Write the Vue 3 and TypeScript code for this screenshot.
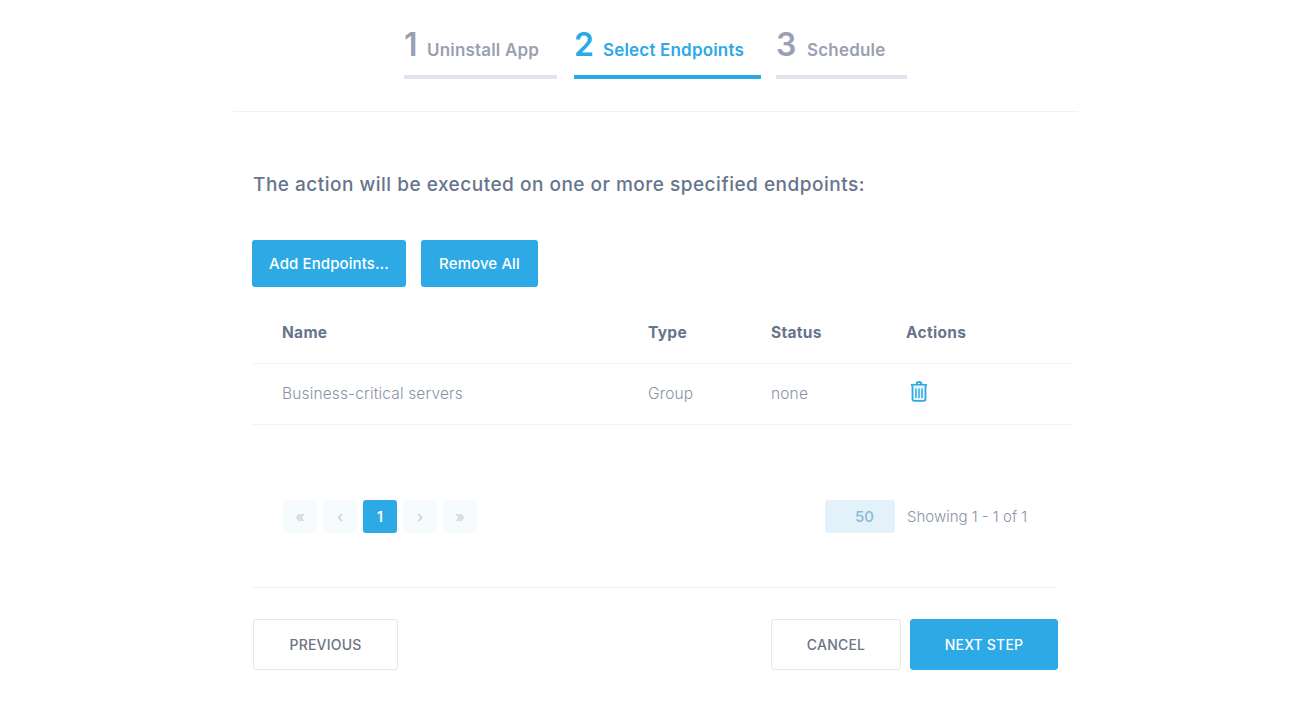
<script setup lang="ts">
interface Step { num: number; label: string; active: boolean; width: number; gap: number }
const steps: Step[] = [
  { num: 1, label: 'Uninstall App', active: false, width: 153, gap: 17 },
  { num: 2, label: 'Select Endpoints', active: true, width: 187, gap: 15 },
  { num: 3, label: 'Schedule', active: false, width: 131, gap: 0 },
]
const pages = ['«', '‹', '1', '›', '»']
</script>

<template>
  <div class="page">
    <div class="wizard">
      <nav class="steps">
        <div
          v-for="s in steps"
          :key="s.num"
          class="step"
          :class="{ active: s.active }"
          :style="{ width: s.width + 'px', marginRight: s.gap + 'px' }"
        >
          <span class="num">{{ s.num }}</span>
          <span class="label">{{ s.label }}</span>
        </div>
      </nav>

      <section class="body">
        <h2 class="title">The action will be executed on one or more specified endpoints:</h2>

        <div class="actions">
          <button class="btn add">Add Endpoints...</button>
          <button class="btn remove">Remove All</button>
        </div>

        <div class="table">
          <div class="row head">
            <span>Name</span><span>Type</span><span>Status</span><span>Actions</span>
          </div>
          <div class="row item">
            <span>Business-critical servers</span><span>Group</span><span>none</span>
            <span class="icon-cell">
              <svg width="18" height="21" viewBox="0 0 18 21" fill="none" stroke="#2daae6">
                <path d="M1 4h16" stroke-width="2" />
                <path d="M6.5 3.5C6.5 1.5 7.5 1 9 1s2.500.5 2.500 2.500" stroke-width="2" />
                <path d="M2.500 4.500v13.500c0 1 .6 1.800 1.800 1.800h9.400c1.200 0 1.800-.8 1.800-1.800V4.500" stroke-width="1.800" fill="#e6f4fc" />
                <path d="M6 7.500v9.500M9 7.500v9.500M12 7.500v9.500" stroke-width="1.500" />
              </svg>
            </span>
          </div>
        </div>

        <div class="pager">
          <div class="pages">
            <span v-for="(p, i) in pages" :key="i" class="pg" :class="{ current: p === '1' }">{{ p }}</span>
          </div>
          <div class="size">
            <span class="select">50</span>
            <span class="showing">Showing 1 - 1 of 1</span>
          </div>
        </div>

        <div class="footer">
          <button class="fbtn prev">PREVIOUS</button>
          <div class="right">
            <button class="fbtn cancel">CANCEL</button>
            <button class="fbtn next">NEXT STEP</button>
          </div>
        </div>
      </section>
    </div>
  </div>
</template>

<style>
html, body { margin: 0; background: #fff; }
</style>

<style scoped>
.page {
  width: 1308px;
  height: 710px;
  overflow: hidden;
  background: #fff;
  font-family: "Inter", "Open Sans", sans-serif;
  color: #6b7a90;
  padding: 0 0 0 233px;
  box-sizing: border-box;
}
.wizard { width: 845px; }
.steps {
  display: flex;
  padding: 26px 0 0 171px;
  height: 85px;
  box-sizing: content-box;
  border-bottom: 1px solid #f1f2f5;
}
.step {
  height: 53px;
  box-sizing: border-box;
  border-bottom: 4px solid #e0e3ec;
  display: flex;
  align-items: baseline;
  color: #9a9fb4;
  align-self: flex-start;
}
.step.active { border-bottom-color: #2daae6; color: #2daae6; }
.num { font-size: 32px; font-weight: 600; line-height: 38px; width: 23px; }
.step:nth-child(2) .num { width: 29px; }
.step:nth-child(3) .num { width: 31px; }
.label { font-size: 17px; font-weight: 600; letter-spacing: 0.18px; }
.body { padding-left: 20px; }
.title {
  margin: 60px 0 0;
  font-size: 19px;
  line-height: 26px;
  font-weight: 500;
  color: #66758c;
  letter-spacing: 0.5px;
}
.actions { display: flex; gap: 15px; margin: 42px 0 0 -1px; }
.btn {
  height: 47px;
  border: 0;
  border-radius: 3px;
  background: #2daae6;
  color: #fff;
  font: 500 15px "Inter", sans-serif;
  letter-spacing: 0.1px;
  padding: 0;
}
.add { width: 154px; }
.remove { width: 117px; }
.table { width: 821px; margin-left: -1px; }
.row {
  display: grid;
  grid-template-columns: 366px 123px 135px 1fr;
  padding-left: 30px;
  align-items: center;
  border-bottom: 1px solid #f3f4f7;
}
.head {
  height: 77px;
  box-sizing: border-box;
  padding-top: 17px;
  padding-bottom: 3px;
  font-size: 15.500px;
  font-weight: 700;
  letter-spacing: 0.3px;
  color: #66758c;
}
.item {
  height: 60px;
  font-size: 15.500px;
  letter-spacing: 0.15px;
  color: #8a94a6;
  font-weight: 300;
}
.item > span:not(.icon-cell) { margin-bottom: 2px; }
.icon-cell { display: flex; padding: 0 0 6px 4px; }
.pager {
  display: flex;
  justify-content: space-between;
  margin-top: 75px;
  width: 777px;
  padding-left: 30px;
  box-sizing: border-box;
}
.pages { display: flex; gap: 6px; }
.pg {
  width: 34px;
  height: 33px;
  border-radius: 3px;
  background: #f6fbfe;
  color: #cfd3df;
  display: flex;
  align-items: center;
  justify-content: center;
  font-size: 15px;
  font-weight: 600;
}
.pg.current { background: #2daae6; color: #fff; font-size: 14px; }
.size { display: flex; align-items: center; gap: 12px; }
.select {
  width: 70px;
  height: 33px;
  border-radius: 3px;
  background: #e3f1fa;
  color: #8fb8d6;
  font-size: 15px;
  font-weight: 500;
  display: flex;
  align-items: center;
  justify-content: flex-end;
  padding-right: 21px;
  box-sizing: border-box;
}
.showing { font-size: 15px; font-weight: 300; color: #8a94a6; width: 123px; white-space: nowrap; }
.footer {
  display: flex;
  justify-content: space-between;
  align-items: center;
  width: 804px;
  margin-top: 54px;
  padding-top: 31px;
  border-top: 1px solid #eff1f4;
  margin-left: -1px;
}
.right { display: flex; gap: 9px; }
.fbtn {
  height: 51px;
  border-radius: 3px;
  font: 500 14px "Inter", sans-serif;
  letter-spacing: 0.2px;
  padding: 0;
  background: #fff;
  border: 1px solid #e6e8ee;
  color: #6b7385;
}
.prev { width: 145px; margin-left: 1px; }
.cancel { width: 130px; }
.next { width: 148px; background: #2daae6; border-color: #2daae6; color: #fff; margin-right: -2px; }
</style>
